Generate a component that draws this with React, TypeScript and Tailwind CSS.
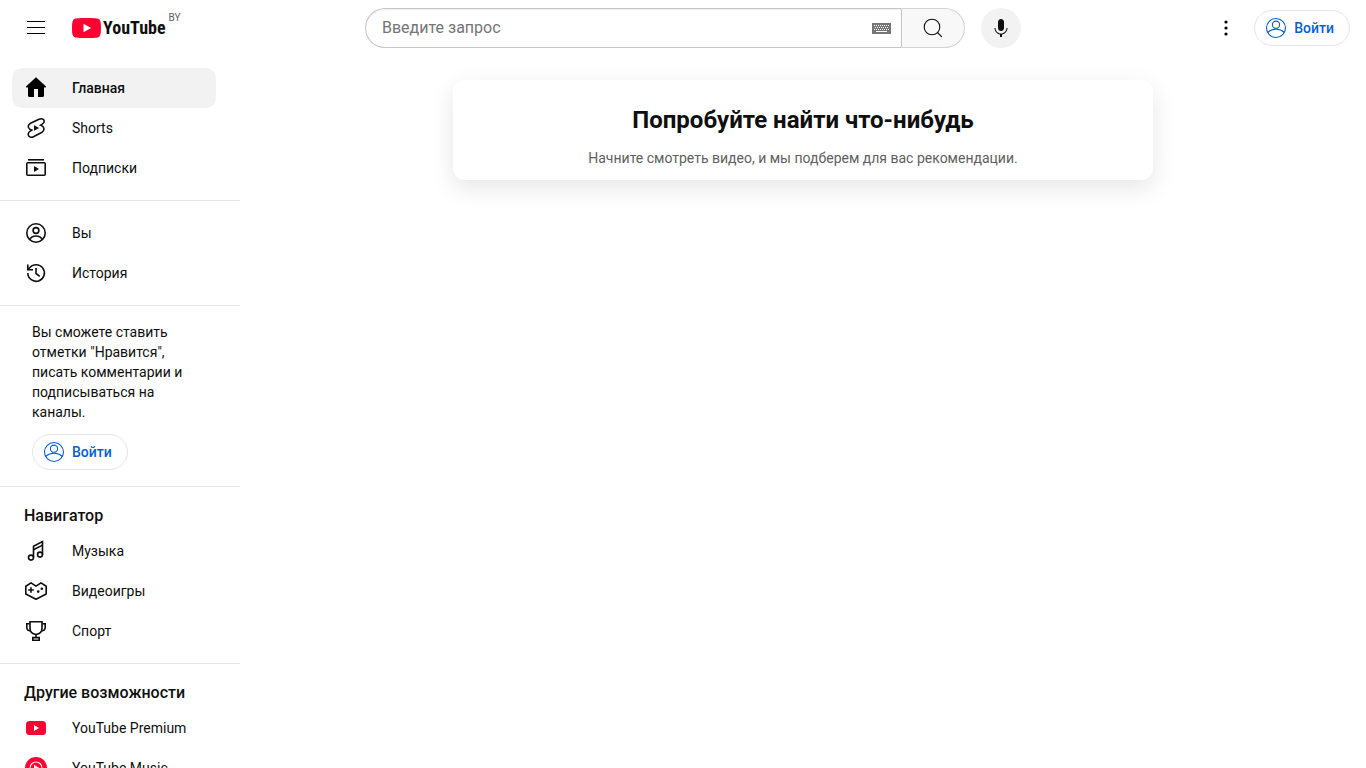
import type { ReactNode } from 'react';

const Icon = ({ children, className = 'w-6 h-6' }: { children: ReactNode; className?: string }) => (
  <svg viewBox="0 0 24 24" className={`${className} shrink-0`} fill="none" stroke="currentColor" strokeWidth="1.6" aria-hidden="true">
    {children}
  </svg>
);

const HomeIcon = () => (
  <Icon>
    <path
      d="M12 1.200 22.300 10.700 21.500 11.500H20V19.500Q20 21 18.500 21H14V13H10V21H5.500Q4 21 4 19.500V11.500H2.500L1.700 10.700Z"
      fill="#000"
      stroke="none"
    />
  </Icon>
);

const ShortsIcon = () => (
  <Icon>
    <path d="M6.500 7.200 15 3.200C17.800 1.900 20 3.300 20.200 5 20.300 6.400 19.500 7.600 18 8.400L16.600 9.200 18 9.900C20.600 11.200 20.600 14.800 18 16.300L9.500 20.800C6.800 22.100 4.200 20.500 4.200 18.200 4.200 16.800 5 15.800 6.200 15.100L7.800 14.200 6.200 13.500C3.500 12.100 3.600 8.700 6.500 7.200Z" />
    <path d="m10 14.800v-5.600L15.200 12l-5.200 2.800z" fill="currentColor" stroke="none" />
  </Icon>
);

const SubscriptionsIcon = () => (
  <Icon>
    <path d="M4 3.800h16" />
    <rect x="2.800" y="6.800" width="18.400" height="12.400" rx="1" />
    <path d="M10 10v6l5-3-5-3z" fill="currentColor" stroke="none" />
  </Icon>
);

const YouIcon = () => (
  <Icon>
    <circle cx="12" cy="12" r="9.200" />
    <circle cx="12" cy="9.500" r="2.900" />
    <path d="M5.800 18.600C7 16 9.300 15 12 15s5 1 6.200 3.600" />
  </Icon>
);

const HistoryIcon = () => (
  <Icon>
    <path d="M3.800 12a8.300 8.300 0 1 0 1.600-4.900L3.800 8.700" />
    <path d="M3.800 3.500v5.200H9" />
    <path d="M12 7v5.500l3.800 2.800" />
  </Icon>
);

const MusicIcon = () => (
  <Icon>
    <circle cx="7" cy="18.600" r="2.500" />
    <circle cx="16" cy="15.600" r="2.500" />
    <path d="M9.500 18.600V7.200l9-4.600v13" />
    <path d="m9.500 10.700 9-4.600" />
  </Icon>
);

const GamingIcon = () => (
  <Icon>
    <path d="M1.800 7.200 7 3.900 12 7.100l5-3.200 5.200 3.300v7.800L12 20.300 1.800 15Z" strokeLinejoin="round" />
    <path d="M7 8.200v5.600M4.200 11h5.600" />
    <circle cx="14.200" cy="12.600" r="1.300" fill="currentColor" stroke="none" />
    <circle cx="17.800" cy="9.800" r="1.300" fill="currentColor" stroke="none" />
  </Icon>
);

const TrophyIcon = () => (
  <Icon>
    <path d="M6 2.800h12v6.700C18 13 15.500 15 12 15.500 8.500 15 6 13 6 9.500Z" />
    <path d="M6 4.800H2.800v3.500C2.800 10.500 4 11.800 6.500 12M18 4.800h3.200v3.500c0 2.200-1.200 3.500-3.700 3.700" />
    <path d="M12 15.500v3M8.800 21.200v-2.600h6.400v2.600Z" />
  </Icon>
);

const SearchIcon = () => (
  <Icon>
    <circle cx="11" cy="11" r="7.800" strokeWidth="1.100" />
    <path d="m16.500 16.500 4.300 4.300" strokeWidth="1.100" />
  </Icon>
);

const MicIcon = () => (
  <Icon>
    <g fill="currentColor" stroke="none">
      <path d="M12 3c-1.660 0-3 1.370-3 3.070v5.860c0 1.700 1.340 3.070 3 3.070s3-1.370 3-3.070V6.070C15 4.370 13.660 3 12 3z" />
      <path d="M18.500 12h-1c0 3.030-2.470 5.500-5.500 5.500S6.500 15.030 6.500 12h-1c0 3.240 2.390 5.930 5.500 6.410V21h2v-2.590c3.110-.48 5.500-3.170 5.500-6.410z" />
    </g>
  </Icon>
);

const PersonIcon = () => (
  <Icon>
    <g strokeWidth="1.100">
      <circle cx="12" cy="12" r="9.500" />
      <circle cx="12" cy="8.700" r="3.600" />
      <path d="M3.800 16.300C6 14.300 9 13.300 12 13.300s6 1 8.200 3" />
    </g>
  </Icon>
);

const PremiumIcon = () => (
  <Icon>
    <rect x="2" y="5" width="20" height="14" rx="3.500" fill="#ff0033" stroke="none" />
    <path d="m10 9 5 3-5 3z" fill="#fff" stroke="none" />
  </Icon>
);

const YouTubeMusicIcon = () => (
  <Icon>
    <circle cx="12" cy="12" r="11" fill="#ff0033" stroke="none" />
    <circle cx="12" cy="12" r="6" stroke="#fff" strokeWidth="1.100" />
    <path d="m10 8.800 5.300 3.200-5.300 3.200z" fill="#fff" stroke="none" />
  </Icon>
);

const KeyboardIcon = () => (
  <svg viewBox="0 0 19 12" className="h-3 w-[19px]" aria-hidden="true">
    <path d="M0 1h19v11H0z" fill="#767676" />
    <path d="M2 3.500h15M2 7.500h15" stroke="#fff" strokeDasharray="1 1" />
    <path d="M3 5.500h14" stroke="#fff" strokeDasharray="1 1" />
    <path d="M4 9.500h11" stroke="#fff" />
  </svg>
);

const Logo = () => (
  <a href="#" aria-label="YouTube" className="flex items-start">
    <span className="flex h-5 items-center gap-0.5">
      <svg viewBox="0 0 29 20" className="h-5 w-[29px]" aria-hidden="true">
        <path
          d="M14.500 0S5.500 0 3.200.6A3.600 3.600 0 0 0 .6 3.200C0 5.400 0 10 0 10s0 4.600.6 6.800a3.600 3.600 0 0 0 2.600 2.600c2.300.6 11.300.6 11.300.6s9 0 11.300-.6a3.600 3.600 0 0 0 2.600-2.600C29 14.600 29 10 29 10s0-4.600-.6-6.800A3.600 3.600 0 0 0 25.800.6C23.500 0 14.500 0 14.500 0Z"
          fill="#ff0033"
        />
        <path d="m11.500 5.800 7.500 4.200-7.500 4.200z" fill="#fff" />
      </svg>
      <span className="font-['Roboto_Condensed','Liberation_Sans_Narrow',Roboto,sans-serif] text-[18px] leading-5 font-bold">YouTube</span>
    </span>
    <span className="-mt-1.5 ml-[3px] text-[10px] leading-3 text-[#606060]">BY</span>
  </a>
);

const SignInButton = () => (
  <button className="flex h-9 items-center gap-1.5 rounded-full border border-[#e5e5e5] pr-[15px] pl-[9px] text-sm font-medium text-[#065fd4]">
    <PersonIcon />
    Войти
  </button>
);

type Item = { icon: ReactNode; label: string; active?: boolean };

const mainItems: Item[] = [
  { icon: <HomeIcon />, label: 'Главная', active: true },
  { icon: <ShortsIcon />, label: 'Shorts' },
  { icon: <SubscriptionsIcon />, label: 'Подписки' },
];

const userItems: Item[] = [
  { icon: <YouIcon />, label: 'Вы' },
  { icon: <HistoryIcon />, label: 'История' },
];

const exploreItems: Item[] = [
  { icon: <MusicIcon />, label: 'Музыка' },
  { icon: <GamingIcon />, label: 'Видеоигры' },
  { icon: <TrophyIcon />, label: 'Спорт' },
];

const moreItems: Item[] = [
  { icon: <PremiumIcon />, label: 'YouTube Premium' },
  { icon: <YouTubeMusicIcon />, label: 'YouTube Music' },
];

const Section = ({ title, items }: { title?: string; items: Item[] }) => (
  <section className="border-b border-[#e5e5e5] py-3 pr-6 pl-3 last:border-b-0">
    {title && <h3 className="px-3 pt-[5px] pb-[3px] text-base leading-6 font-medium">{title}</h3>}
    {items.map((item) => (
      <a
        key={item.label}
        href="#"
        className={`flex h-10 items-center gap-6 rounded-[10px] px-3 text-sm ${item.active ? 'bg-[#f2f2f2] font-medium' : 'hover:bg-[#f2f2f2]'}`}
      >
        {item.icon}
        <span className="whitespace-nowrap">{item.label}</span>
      </a>
    ))}
  </section>
);

const Header = () => (
  <header className="flex h-14 shrink-0 items-center px-4">
    <div className="flex flex-1 items-center gap-4">
      <button aria-label="Меню" className="flex size-10 items-center justify-center rounded-full">
        <Icon>
          <path d="M21 6H3V5h18v1zm0 5H3v1h18v-1zm0 6H3v1h18v-1z" fill="#030303" stroke="none" />
        </Icon>
      </button>
      <Logo />
    </div>

    <div className="flex min-w-0 flex-[0_1_676px] items-center gap-4 pl-5">
      <form className="flex h-10 min-w-0 flex-1">
        <div className="flex min-w-0 flex-1 items-center rounded-l-full border border-r-0 border-[#c6c6c6] pr-2.5 pl-4 shadow-[inset_0_1px_2px_#eee]">
          <input
            type="text"
            aria-label="Введите запрос"
            placeholder="Введите запрос"
            className="min-w-0 flex-1 bg-transparent text-base leading-6 outline-none placeholder:text-[#757575]"
          />
          <button type="button" aria-label="Экранная клавиатура">
            <KeyboardIcon />
          </button>
        </div>
        <button type="button" aria-label="Поиск" className="flex w-16 items-center justify-center rounded-r-full border border-[#d3d3d3] border-l-[#c6c6c6] bg-[#f8f8f8]">
          <SearchIcon />
        </button>
      </form>
      <button aria-label="Голосовой поиск" className="flex size-10 items-center justify-center rounded-full bg-[#f2f2f2]">
        <MicIcon />
      </button>
    </div>

    <div className="flex flex-1 items-center justify-end gap-2">
      <button aria-label="Настройки" className="flex size-10 items-center justify-center rounded-full">
        <Icon>
          <g fill="#030303" stroke="none">
            <circle cx="12" cy="6" r="1.600" />
            <circle cx="12" cy="12" r="1.600" />
            <circle cx="12" cy="18" r="1.600" />
          </g>
        </Icon>
      </button>
      <SignInButton />
    </div>
  </header>
);

const App = () => {
  return (
    <div className="flex h-screen flex-col overflow-hidden bg-white font-[Roboto,Arial,sans-serif] text-[#0f0f0f]">
      <Header />
      <div className="flex min-h-0 flex-1">
        <nav className="w-60 shrink-0 overflow-y-auto [scrollbar-width:none]">
          <Section items={mainItems} />
          <Section items={userItems} />
          <section className="border-b border-[#e5e5e5] px-8 py-4 text-sm">
            <p className="mb-3">Вы сможете ставить отметки "Нравится", писать комментарии и подписываться на каналы.</p>
            <SignInButton />
          </section>
          <Section title="Навигатор" items={exploreItems} />
          <Section title="Другие возможности" items={moreItems} />
        </nav>

        <main className="flex-1 px-6 pt-6">
          <div className="mx-auto max-w-[700px] rounded-xl px-4 pt-6 pb-3 text-center shadow-[0_8px_24px_rgba(0,0,0,0.1)]">
            <h1 className="text-2xl font-bold">Попробуйте найти что-нибудь</h1>
            <p className="mt-3 text-sm text-[#606060]">Начните смотреть видео, и мы подберем для вас рекомендации.</p>
          </div>
        </main>
      </div>
    </div>
  );
};

export default App;
